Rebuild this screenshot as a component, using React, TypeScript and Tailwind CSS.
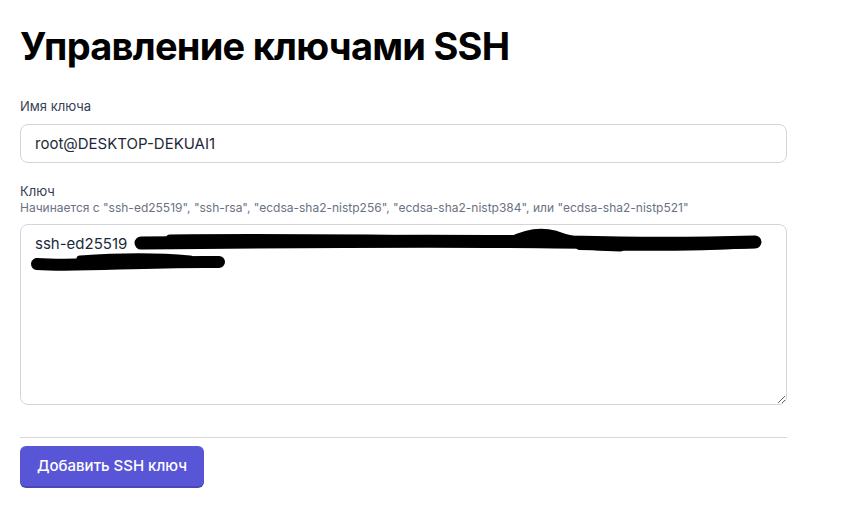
import React from "react"

const Scribble = () => (
  <svg
    className="pointer-events-none absolute left-0 top-0"
    width="780"
    height="60"
    viewBox="0 0 780 60"
  >
    <g stroke="#000" strokeLinecap="round" strokeLinejoin="round" fill="none">
      <path d="M121 19 C 300 17, 480 16, 600 19 C 660 20, 700 19, 735 18" strokeWidth="13" />
      <path d="M150 15 C 250 14, 360 15, 470 17" strokeWidth="9" />
      <path d="M492 18 C 505 11, 520 8, 535 12 C 545 16, 560 21, 600 22" strokeWidth="11" />
      <path d="M560 21 C 640 23, 700 21, 735 19" strokeWidth="10" />
      <path d="M17 40 C 60 43, 120 37, 199 38" strokeWidth="12" />
      <path d="M60 35 C 100 32, 140 32, 170 35" strokeWidth="7" />
    </g>
  </svg>
)

export default function App() {
  return (
    <div className="min-h-screen bg-white font-['Inter',sans-serif] text-gray-900">
      <div className="ml-5 w-[767px] pt-[22px]">
        <h1 className="text-[38px] font-bold leading-[48px] tracking-[-0.02em] text-black">
          Управление ключами SSH
        </h1>

        <div className="mt-[28px]">
          <label className="block text-[13px] leading-4 text-gray-700">Имя ключа</label>
          <input
            className="mt-[10px] block h-[39px] w-full rounded-lg border border-[#cfd6df] px-[14px] text-[15px] text-gray-800 outline-none"
            defaultValue="root@DESKTOP-DEKUAI1"
          />
        </div>

        <div className="mt-[20px]">
          <label className="block text-[13px] leading-4 text-gray-700">Ключ</label>
          <p className="mt-[1px] text-[12px] leading-4 text-gray-500">
            Начинается с "ssh-ed25519", "ssh-rsa", "ecdsa-sha2-nistp256", "ecdsa-sha2-nistp384", или "ecdsa-sha2-nistp521"
          </p>
          <div className="relative mt-[8px]">
            <textarea
              className="block h-[181px] w-full resize-y rounded-lg border border-[#cfd6df] px-[14px] py-[9px] text-[15px] leading-5 text-gray-800 outline-none"
              defaultValue="ssh-ed25519"
            />
            <Scribble />
          </div>
        </div>

        <div className="mt-[32px] border-t border-[#d4d8de]" />

        <button className="mt-[8px] h-[40px] rounded-md bg-[#5856d6] px-[17px] text-[15px] font-medium text-white shadow-[0_2px_0_#4846b8]">
          Добавить SSH ключ
        </button>
      </div>
    </div>
  )
}
